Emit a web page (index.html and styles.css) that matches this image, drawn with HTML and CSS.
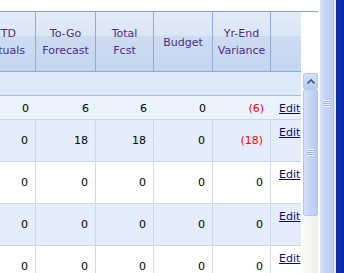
FILE: index.html
```html
<!DOCTYPE html>
<html lang="en">
<head>
  <meta charset="UTF-8" />
  <title>Forecast Grid</title>
  <link rel="stylesheet" href="styles.css">
</head>
<body>

  <div class="screen">

    <!-- Grid pane -->
    <div class="pane">
      <div class="grid-clip">
        <table class="grid">
          <thead>
            <tr>
              <th class="c1"><a>YTD<br>Actuals</a></th>
              <th class="c2"><a>To-Go<br>Forecast</a></th>
              <th class="c3"><a>Total<br>Fcst</a></th>
              <th class="c4"><a>Budget</a></th>
              <th class="c5"><a>Yr-End<br>Variance</a></th>
              <th class="c6"></th>
            </tr>
          </thead>
          <tbody>
            <tr class="group"><td colspan="6"></td></tr>
            <tr class="sub">
              <td>0</td><td>6</td><td>6</td><td>0</td><td class="neg">(6)</td><td class="act"><a href="#">Edit</a></td>
            </tr>
            <tr class="alt">
              <td>0</td><td>18</td><td>18</td><td>0</td><td class="neg">(18)</td><td class="act"><a href="#">Edit</a></td>
            </tr>
            <tr>
              <td>0</td><td>0</td><td>0</td><td>0</td><td>0</td><td class="act"><a href="#">Edit</a></td>
            </tr>
            <tr class="alt">
              <td>0</td><td>0</td><td>0</td><td>0</td><td>0</td><td class="act"><a href="#">Edit</a></td>
            </tr>
            <tr>
              <td>0</td><td>0</td><td>0</td><td>0</td><td>0</td><td class="act"><a href="#">Edit</a></td>
            </tr>
          </tbody>
        </table>
      </div>

      <!-- Grid scrollbar -->
      <div class="vscroll">
        <div class="vs-up">
          <svg width="8" height="5" viewBox="0 0 8 5"><path d="M0.5 4.5 L4 1 L7.5 4.5" fill="none" stroke="#3d5582" stroke-width="1.6"/></svg>
        </div>
        <div class="vs-thumb"><span class="grip"></span></div>
        <div class="vs-track"></div>
      </div>
    </div>

    <!-- Page scrollbar + window frame -->
    <div class="page-scroll"><span class="grip"></span></div>
    <div class="edge"></div>
    <div class="frame"></div>
  </div>

</body>
</html>
```

FILE: styles.css
```css
/* ---------- Page ---------- */
html,body{margin:0;padding:0;background:#fff}
body{
  font-family:"DejaVu Sans",Verdana,sans-serif;
  font-size:11px;
  color:#000;
  overflow:hidden;
}
.screen{display:flex;height:273px;width:344px}

/* ---------- Grid pane ---------- */
.pane{
  width:318px;
  margin-top:11px;
  border-top:1px solid #86a3d2;
  display:flex;
  align-items:flex-start;
}
.grid-clip{width:301px;overflow:hidden;height:261px}

.grid{
  margin-left:-25px;
  width:326px;
  table-layout:fixed;
  border-collapse:separate;
  border-spacing:0;
}
.grid th,.grid td{box-sizing:border-box;padding:0}

.c1{width:61px}
.c2{width:60px}
.c3{width:58px}
.c4{width:59px}
.c5{width:58px}
.c6{width:30px}

/* header */
.grid th{
  height:60px;
  font-weight:normal;
  line-height:17px;
  text-align:center;
  vertical-align:middle;
  padding-top:1px;
  border-right:1px solid #8eaad9;
  border-bottom:1px solid #8eaad9;
  background:linear-gradient(#e4ecf8 0,#dbe6f5 40%,#cedcf1 41%,#c3d6f0 100%);
}
.grid th.c6{border-right:0}
.grid th a{color:#4c2c88}

/* rows */
.grid td{
  height:42px;
  text-align:right;
  vertical-align:middle;
  padding-right:7px;
  border-right:1px solid #d1d9e9;
  border-bottom:1px solid #ccd6e8;
  line-height:15px;
}
.grid tr.alt td{background:#e3edfc}

.grid tr.group td{
  height:24px;
  background:#dee9f8;
  border-right:0;
  border-bottom:1px solid #a9bddc;
}
.grid tr.sub td{
  height:24px;
  background:#eaf2fc;
  border-right:0;
  padding-top:1px;
}

.grid td.neg{color:#f00}
.grid td.act{
  text-align:left;
  vertical-align:top;
  padding:5px 0 0 8px;
  border-right:0;
}
.grid tr.sub td.act{vertical-align:middle;padding-top:1px}
.grid td.act a{color:#0c0c6e;text-decoration:underline}

/* ---------- Grid scrollbar ---------- */
.vscroll{
  width:15px;
  margin-left:2px;
  margin-top:61px;
  height:200px;
  display:flex;
  flex-direction:column;
}
.vs-up{
  height:16px;
  box-sizing:border-box;
  border:1px solid #b4c7ee;
  border-radius:2px;
  background:linear-gradient(#d5e1fb,#b7cbf3);
  display:flex;
  align-items:center;
  justify-content:center;
}
.vs-thumb{
  height:127px;
  box-sizing:border-box;
  border:1px solid #b3c6ee;
  border-radius:2px;
  background:linear-gradient(90deg,#d4e0fa,#c3d4f6 50%,#b9cbf3);
  display:flex;
  align-items:center;
  justify-content:center;
}
.vs-track{flex:1;background:linear-gradient(90deg,#fbfaf6,#f1efe8)}

.grip{
  display:block;
  width:7px;
  height:7px;
  background:repeating-linear-gradient(#eef3fd 0 1px,#9db3e3 1px 2px);
}

/* ---------- Page scrollbar / frame ---------- */
.page-scroll{
  width:13px;
  margin-left:2px;
  background:linear-gradient(90deg,#d7e2fb,#c4d4f6 40%,#bccef4);
  border-right:1px solid #aebfe6;
  padding-top:100px;
  display:flex;
  justify-content:center;
  align-items:flex-start;
}
.edge{width:2px;background:#e6ebf6}
.frame{flex:1;background:linear-gradient(90deg,#0a2ca4,#0b2fb0 60%,#0826a0)}
```
